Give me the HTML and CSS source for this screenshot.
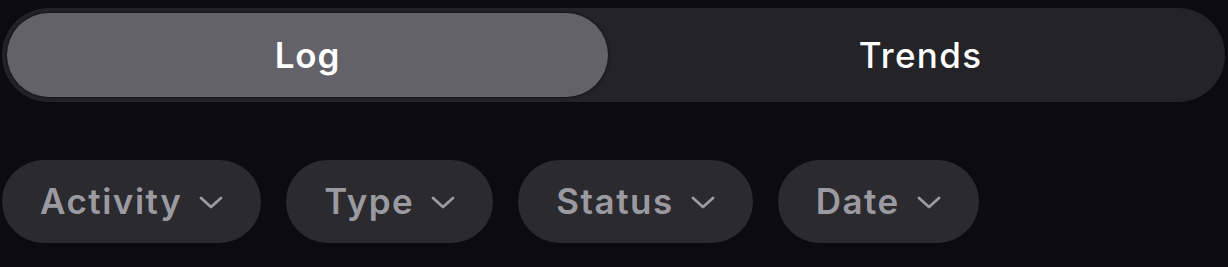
FILE: index.html
```
<!DOCTYPE html>
<html>
<head>
<meta charset="utf-8">
<link rel="stylesheet" href="styles.css">
</head>
<body>
<div class="page">
  <div class="segmented">
    <div class="seg seg-active">Log</div>
    <div class="seg">Trends</div>
  </div>
  <div class="filters">
    <div class="chip"><span>Activity</span><svg class="chev" viewBox="0 0 24 13" width="24" height="13"><path d="M2 2 L12 11 L22 2" fill="none" stroke="currentColor" stroke-width="2.8" stroke-linecap="round" stroke-linejoin="round"/></svg></div>
    <div class="chip"><span>Type</span><svg class="chev" viewBox="0 0 24 13" width="24" height="13"><path d="M2 2 L12 11 L22 2" fill="none" stroke="currentColor" stroke-width="2.8" stroke-linecap="round" stroke-linejoin="round"/></svg></div>
    <div class="chip"><span>Status</span><svg class="chev" viewBox="0 0 24 13" width="24" height="13"><path d="M2 2 L12 11 L22 2" fill="none" stroke="currentColor" stroke-width="2.8" stroke-linecap="round" stroke-linejoin="round"/></svg></div>
    <div class="chip"><span>Date</span><svg class="chev" viewBox="0 0 24 13" width="24" height="13"><path d="M2 2 L12 11 L22 2" fill="none" stroke="currentColor" stroke-width="2.8" stroke-linecap="round" stroke-linejoin="round"/></svg></div>
  </div>
</div>
</body>
</html>
```
FILE: styles.css
```
html, body {
  margin: 0;
  padding: 0;
  background: #0c0c10;
}
body {
  font-family: Inter, "Noto Sans", sans-serif;
  -webkit-font-smoothing: antialiased;
}
.page {
  width: 1228px;
  height: 267px;
  padding: 8px 3px 0 2px;
  box-sizing: border-box;
  display: flex;
  flex-direction: column;
}
.segmented {
  height: 94px;
  box-sizing: border-box;
  padding: 5px;
  background: #232328;
  border-radius: 47px;
  display: flex;
  gap: 12px;
}
.seg {
  flex: 0 0 601px;
  height: 84px;
  border-radius: 42px;
  display: flex;
  align-items: center;
  justify-content: center;
  color: #ffffff;
  font-size: 35px;
  font-weight: 500;
  letter-spacing: 1.3px;
}
.seg-active {
  background: #636269;
  font-weight: 600;
  letter-spacing: 0.9px;
  box-shadow: 0 0 3px 1px rgba(0,0,0,0.35);
}
.filters {
  margin-top: 58px;
  display: flex;
  gap: 25px;
}
.chip {
  height: 83px;
  box-sizing: border-box;
  padding: 0 38px 0 38px;
  border-radius: 42px;
  background: #2a2a2f;
  color: #9b9aa1;
  display: flex;
  align-items: center;
  gap: 17px;
  font-size: 35px;
  font-weight: 600;
  letter-spacing: 1.5px;
}
.chip span {
  padding-bottom: 2px;
}
.chev {
  display: block;
  margin-top: 2px;
}
```
